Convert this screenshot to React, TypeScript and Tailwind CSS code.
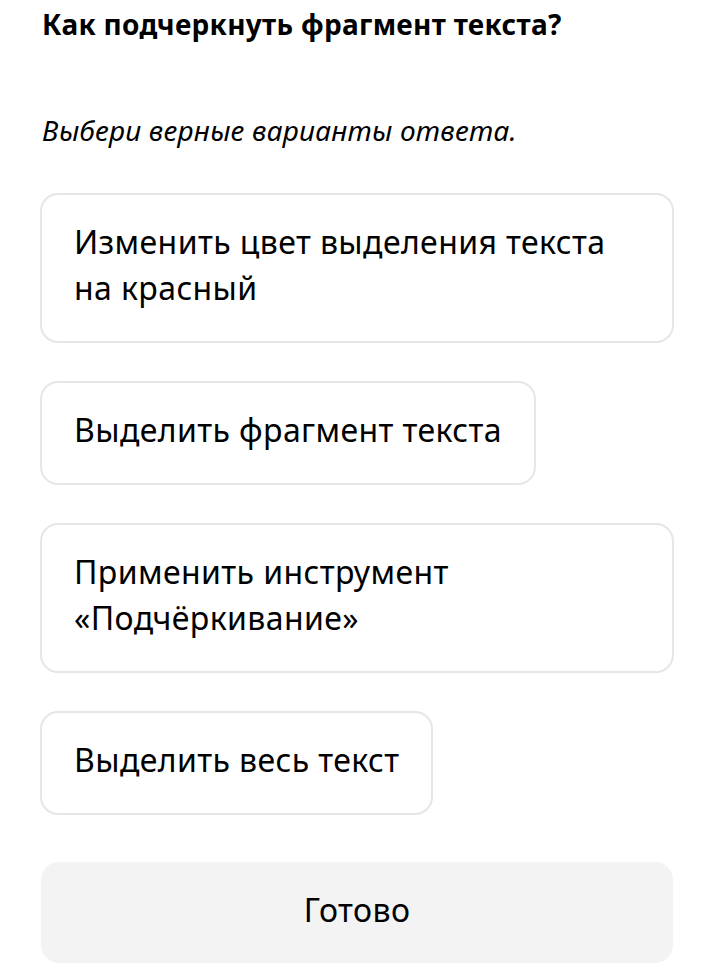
import React from "react";

const box =
  "rounded-[18px] border-2 border-[#e6e6e6] bg-white px-[32px] pt-[24px] pb-[30px] text-[32px] leading-[46px] tracking-[0.4px]";

export default function App() {
  return (
    <div className="min-h-[973px] w-[716px] bg-white px-[40px] pt-[6px] font-['Noto_Sans',sans-serif] text-black">
      <h1 className="pl-[2px] text-[28px] font-bold leading-[36px] tracking-[0.3px]">
        Как подчеркнуть фрагмент текста?
      </h1>
      <p className="mt-[70px] pl-[2px] text-[28px] italic leading-[36px] tracking-[0.2px]">
        Выбери верные варианты ответа.
      </p>
      <div className="mt-[45px] flex flex-col items-start gap-[38px]">
        <div className={`w-[634px] ${box}`}>
          Изменить цвет выделения текста
          <br />
          на красный
        </div>
        <div className={box}>Выделить фрагмент текста</div>
        <div className={`w-[634px] ${box}`}>
          Применить инструмент
          <br />
          «Подчёркивание»
        </div>
        <div className={box}>Выделить весь текст</div>
      </div>
      <button className="ml-[1px] mt-[47px] flex h-[101px] w-[632px] items-center justify-center rounded-[18px] bg-[#f3f3f3] pb-[6px] text-[32px] leading-[46px] tracking-[0.4px]">
        Готово
      </button>
    </div>
  );
}
